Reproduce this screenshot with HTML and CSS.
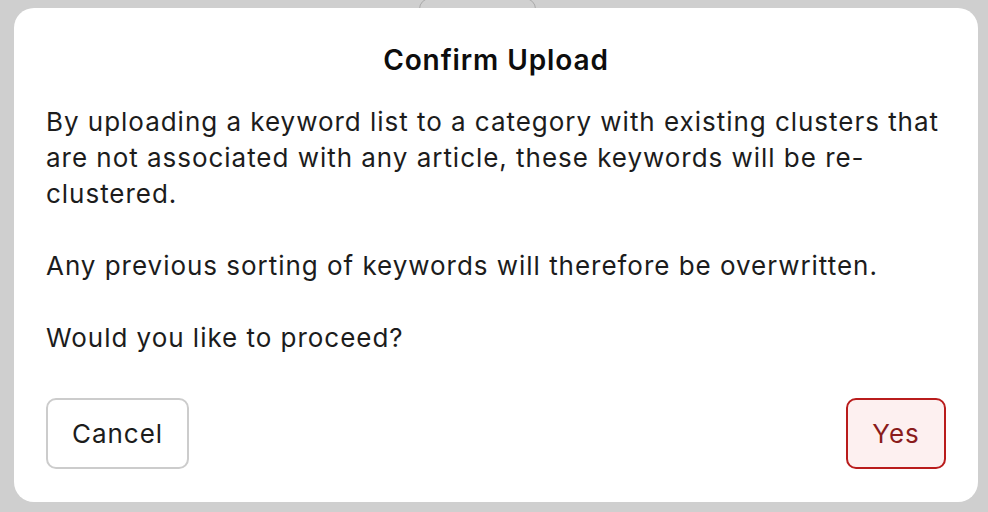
FILE: index.html
```html
<!DOCTYPE html>
<html lang="en">
<head>
<meta charset="utf-8">
<link rel="stylesheet" href="styles.css">
</head>
<body>
<div class="backdrop-tab"></div>
<div class="modal">
  <h2 class="title">Confirm Upload</h2>
  <div class="content">
    <p>By uploading a keyword list to a category with existing clusters that are not associated with any article, these keywords will be re-clustered.</p>
    <p>Any previous sorting of keywords will therefore be overwritten.</p>
    <p>Would you like to proceed?</p>
  </div>
  <div class="actions">
    <button class="btn btn-cancel">Cancel</button>
    <button class="btn btn-yes">Yes</button>
  </div>
</div>
</body>
</html>
```
FILE: styles.css
```css
* { box-sizing: border-box; }
html, body { height: 100%; }
body {
  margin: 0;
  background: #cfcfcf;
  font-family: Inter, "Noto Sans", sans-serif;
  position: relative;
  overflow: hidden;
  padding: 8px 10px 10px 14px;
}
.backdrop-tab {
  position: absolute;
  left: 419px;
  top: -2px;
  width: 117px;
  height: 40px;
  border: 1.5px solid #aaaaaa;
  border-radius: 11px;
  background: #d0d0d0;
}
.modal {
  position: relative;
  width: 964px;
  height: 494px;
  background: #ffffff;
  border-radius: 20px;
  padding: 34px 32px 33px 32px;
  display: flex;
  flex-direction: column;
}
.title {
  margin: 0;
  text-align: center;
  font-size: 28px;
  font-weight: 600;
  letter-spacing: 0.9px;
  line-height: 36px;
  color: #0d0d0d;
}
.content {
  margin-top: 26px;
  font-size: 26px;
  letter-spacing: 0.97px;
  line-height: 36px;
  color: #1c1c1c;
}
.content p { margin: 0 0 36px 0; }
.content p:last-child { margin-bottom: 0; }
.actions {
  margin-top: auto;
  display: flex;
  justify-content: space-between;
}
.btn {
  font-family: inherit;
  font-size: 26px;
  letter-spacing: 0.97px;
  line-height: 35px;
  height: 71px;
  padding: 16px 0;
  text-align: center;
  border-radius: 10px;
  border: 2px solid #cccccc;
  background: #ffffff;
  color: #1c1c1c;
}
.btn-cancel { width: 143px; }
.btn-yes {
  width: 100px;
  border-color: #b91c1c;
  background: #fdf0f0;
  color: #8a1c1c;
}
```
